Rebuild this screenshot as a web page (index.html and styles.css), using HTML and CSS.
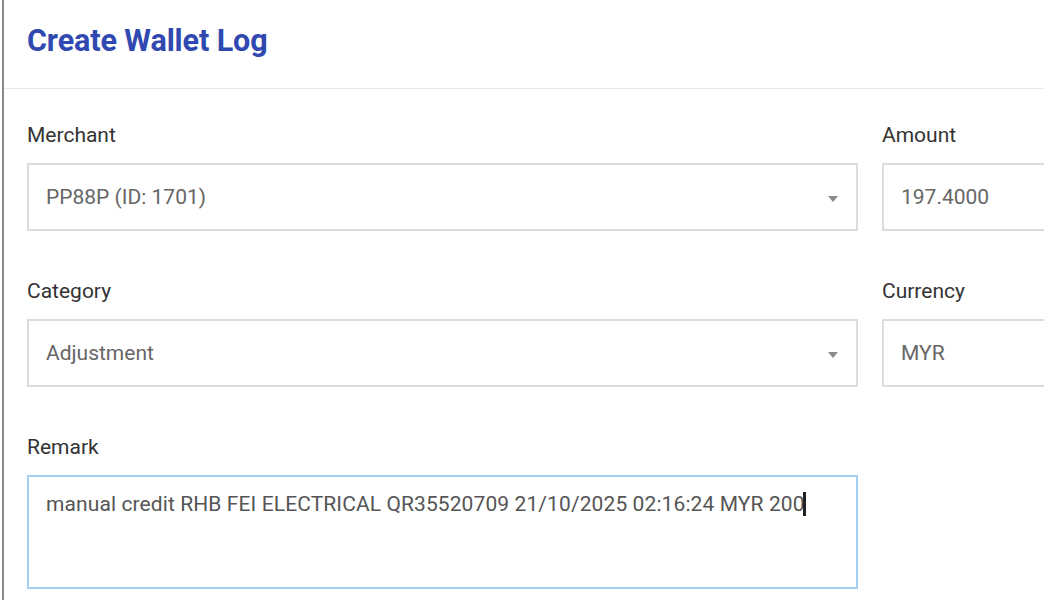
FILE: index.html
```html
<!DOCTYPE html>
<html lang="en">
<head>
<meta charset="utf-8">
<title>Create Wallet Log</title>
<link rel="stylesheet" href="styles.css">
</head>
<body>
<div class="card">
  <div class="card-header">
    <h1 class="title">Create Wallet Log</h1>
  </div>
  <div class="card-body">
    <div class="row">
      <div class="field">
        <label class="label">Merchant</label>
        <div class="control select">
          <span class="value">PP88P (ID: 1701)</span>
          <span class="caret-down"></span>
        </div>
      </div>
      <div class="field">
        <label class="label">Amount</label>
        <div class="control"><span class="value">197.4000</span></div>
      </div>
    </div>
    <div class="row">
      <div class="field">
        <label class="label">Category</label>
        <div class="control select">
          <span class="value">Adjustment</span>
          <span class="caret-down"></span>
        </div>
      </div>
      <div class="field">
        <label class="label">Currency</label>
        <div class="control"><span class="value">MYR</span></div>
      </div>
    </div>
    <div class="row">
      <div class="field">
        <label class="label">Remark</label>
        <div class="control textarea"><span class="value">manual credit RHB FEI ELECTRICAL QR35520709 21/10/2025 02:16:24 MYR 200</span><span class="cursor"></span></div>
      </div>
    </div>
  </div>
</div>
</body>
</html>
```

FILE: styles.css
```css
html, body {
  margin: 0;
  padding: 0;
  background: #ffffff;
  overflow: hidden;
}
body {
  font-family: Roboto, "Liberation Sans", Arial, sans-serif;
  color: #333;
  width: 1044px;
  height: 600px;
}
.card {
  margin-left: 2px;
  border-left: 2px solid #8a8a8a;
  height: 600px;
  width: 1042px;
  overflow: hidden;
  background: #fff;
}
.card-header {
  padding: 23px 0 29px 23px;
  border-bottom: 1px solid #e8e8e8;
}
.title {
  margin: 0;
  font-size: 30.5px;
  line-height: 36px;
  font-weight: 700;
  color: #2f49b1;
  letter-spacing: -0.1px;
}
.card-body {
  padding: 34px 0 0 23px;
}
.row {
  display: grid;
  grid-template-columns: 831px 400px;
  column-gap: 24px;
  margin-bottom: 48px;
}
.field {
  display: flex;
  flex-direction: column;
}
.label {
  font-size: 21px;
  line-height: 24px;
  color: #333;
  margin-bottom: 16px;
}
.control {
  box-sizing: border-box;
  height: 68px;
  border: 2px solid #dcdcdc;
  display: flex;
  align-items: center;
  padding: 0 18px 0 17px;
  font-size: 21px;
  color: #666;
}
.select {
  justify-content: space-between;
}
.caret-down {
  width: 0;
  height: 0;
  border-left: 5px solid transparent;
  border-right: 5px solid transparent;
  border-top: 6px solid #8a8a8a;
  margin-top: 3px;
}
.textarea {
  height: 114px;
  align-items: flex-start;
  padding-top: 15px;
  border-color: #a3cff3;
}
.textarea .value {
  line-height: 24px;
  color: #555;
  letter-spacing: 0.1px;
  white-space: nowrap;
}
.cursor {
  display: inline-block;
  width: 3px;
  height: 24px;
  background: #222;
  margin-left: -2px;
}
```
